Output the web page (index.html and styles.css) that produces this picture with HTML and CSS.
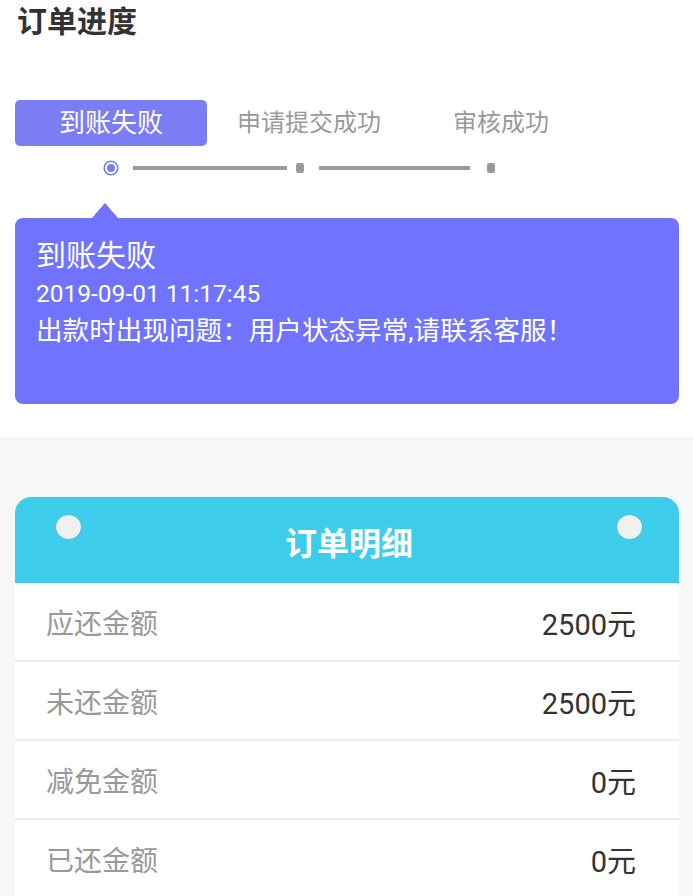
FILE: index.html
```html
<!DOCTYPE html>
<html lang="zh-CN">
<head>
<meta charset="utf-8">
<title>订单进度</title>
<link rel="stylesheet" href="styles.css">
</head>
<body>
<section class="progress">
  <h1 class="page-title">订单进度</h1>
  <div class="tabs">
    <div class="tab tab-active">到账失败</div>
    <div class="tab tab-two">申请提交成功</div>
    <div class="tab tab-three">审核成功</div>
  </div>
  <div class="steps">
    <span class="step-dot"></span>
    <span class="step-line line-one"></span>
    <span class="step-mark mark-one"></span>
    <span class="step-line line-two"></span>
    <span class="step-mark mark-two"></span>
  </div>
  <div class="pointer"></div>
  <div class="status-card">
    <div class="status-title">到账失败</div>
    <div class="status-time">2019-09-01 11:17:45</div>
    <div class="status-msg">出款时出现问题：用户状态异常,请联系客服！</div>
  </div>
</section>
<section class="detail">
  <div class="detail-card">
    <div class="detail-head">
      <span class="hole"></span>
      <span class="detail-title">订单明细</span>
      <span class="hole"></span>
    </div>
    <div class="row"><span class="label">应还金额</span><span class="value">2500元</span></div>
    <div class="row"><span class="label">未还金额</span><span class="value">2500元</span></div>
    <div class="row"><span class="label">减免金额</span><span class="value">0元</span></div>
    <div class="row"><span class="label">已还金额</span><span class="value">0元</span></div>
  </div>
</section>
</body>
</html>
```

FILE: styles.css
```css
html, body {
  margin: 0;
  padding: 0;
}
body {
  background: #f7f7f7;
  font-family: Roboto, "Noto Sans CJK SC", "Noto Sans", sans-serif;
  color: #333;
  width: 693px;
  overflow: hidden;
}
.progress {
  background: #fff;
  padding: 0 14px 33px 15px;
}
.page-title {
  margin: 0 0 0 2px;
  height: 100px;
  font-size: 30px;
  font-weight: bold;
  line-height: 44px;
  color: #333;
}
.tabs {
  display: grid;
  grid-template-columns: 192px 204px 180px;
  height: 46px;
}
.tab {
  text-align: center;
  font-size: 24px;
  line-height: 46px;
  color: #999;
}
.tab-active {
  background: #7a7df4;
  border-radius: 5px;
  color: #fff;
  font-size: 26px;
}
.steps {
  display: flex;
  align-items: center;
  height: 16px;
  margin-top: 14px;
}
.step-dot {
  box-sizing: border-box;
  width: 12px;
  height: 12px;
  margin-left: 90px;
  border-radius: 50%;
  background: #7a7df4;
  border: 2px solid #fff;
  box-shadow: 0 0 0 1.6px #7a7df4;
}
.step-line {
  height: 4px;
  background: #9a9a9a;
}
.line-one {
  width: 154px;
  margin-left: 16px;
}
.line-two {
  width: 151px;
  margin-left: 15px;
}
.step-mark {
  width: 8px;
  height: 10px;
  border-radius: 2px;
  background: #9a9a9a;
}
.mark-one {
  margin-left: 9px;
}
.mark-two {
  margin-left: 17px;
}
.pointer {
  width: 0;
  height: 0;
  margin: 27px 0 0 77px;
  border-left: 13px solid transparent;
  border-right: 13px solid transparent;
  border-bottom: 15px solid #6f73fe;
}
.status-card {
  box-sizing: border-box;
  height: 186px;
  background: #6f73fe;
  border-radius: 8px;
  padding: 18px 21px;
  color: #fff;
}
.status-title {
  font-size: 30px;
  line-height: 40px;
}
.status-time {
  font-size: 24.5px;
  line-height: 36px;
}
.status-msg {
  font-size: 26.6px;
  line-height: 38px;
}
.detail {
  padding: 60px 14px 0 15px;
}
.detail-card {
  background: #fff;
  border-radius: 16px 16px 0 0;
  overflow: hidden;
}
.detail-head {
  height: 86px;
  background: #3dcdeb;
  display: flex;
  align-items: center;
  justify-content: space-between;
  padding: 0 37px 0 41px;
}
.hole {
  width: 25px;
  height: 24px;
  border-radius: 50%;
  background: #f0f0f0;
  box-shadow: 0 0 1px rgba(0, 0, 0, 0.25);
  align-self: flex-start;
  margin-top: 18px;
}
.detail-title {
  color: #fff;
  font-size: 32px;
  font-weight: bold;
  margin-top: 2px;
}
.row {
  display: flex;
  justify-content: space-between;
  align-items: center;
  height: 77px;
  padding: 0 43px 0 31px;
  border-bottom: 2px solid #ececec;
}
.label {
  font-size: 28px;
  color: #999;
}
.value {
  font-size: 29px;
  color: #333;
}
```
